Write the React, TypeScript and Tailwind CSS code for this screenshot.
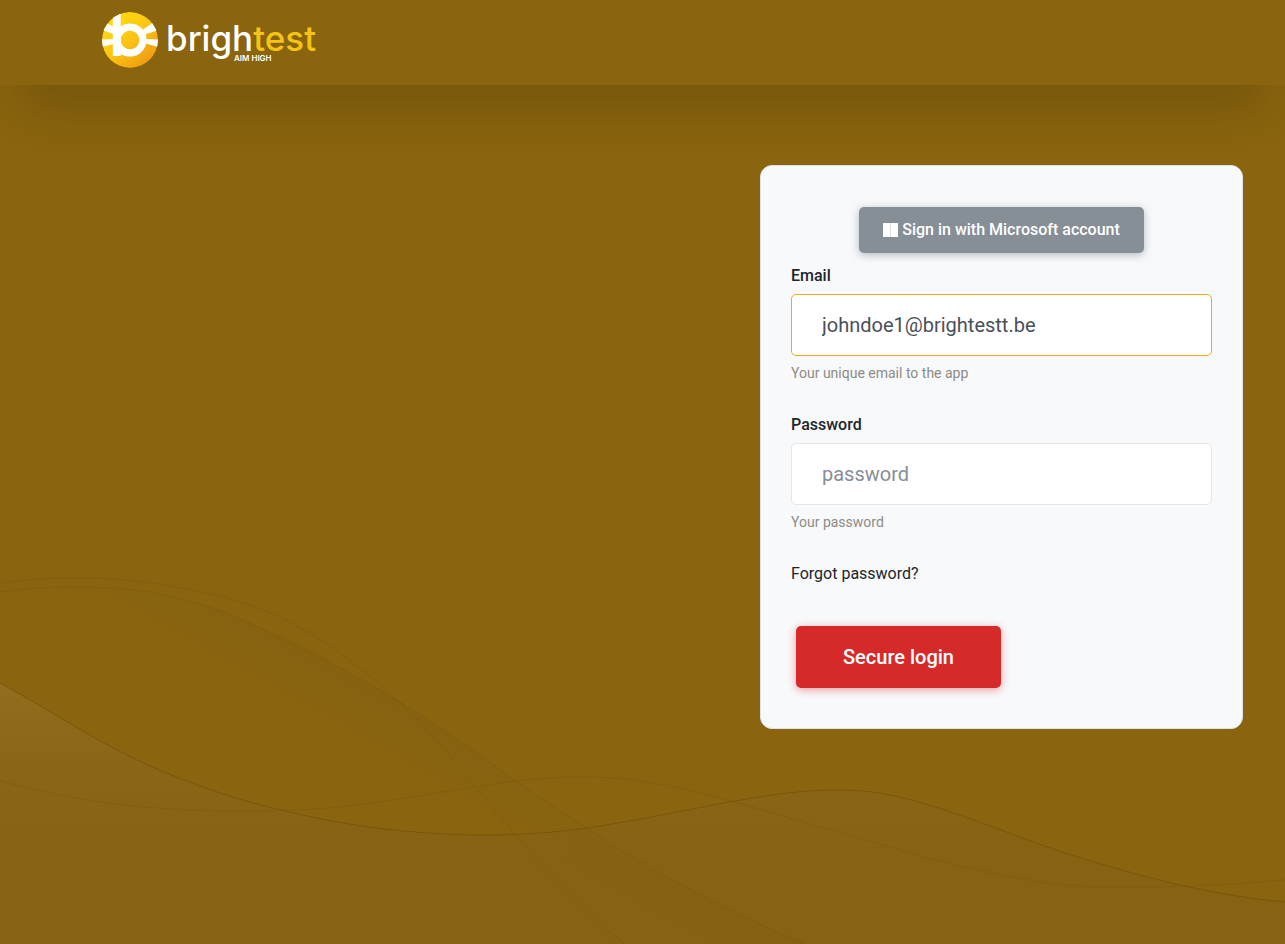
import React from "react";

function Waves() {
  return (
    <svg
      className="pointer-events-none absolute inset-x-0 bottom-0 -z-10 h-96 w-full"
      viewBox="0 560 1285 384"
      preserveAspectRatio="none"
      fill="none"
      aria-hidden="true"
    >
      <defs>
        <linearGradient id="hill" gradientUnits="userSpaceOnUse" x1="0" y1="683" x2="0" y2="860">
          <stop offset="0" stopColor="#926d1d" />
          <stop offset="0.5" stopColor="#8a6515" />
          <stop offset="1" stopColor="#876212" />
        </linearGradient>
        <linearGradient id="band" gradientUnits="userSpaceOnUse" x1="398" y1="701" x2="367" y2="756">
          <stop offset="0" stopColor="#7d5c18" stopOpacity="0.28" />
          <stop offset="1" stopColor="#7d5c18" stopOpacity="0" />
        </linearGradient>
      </defs>
      <path
        d="M0 683C55 713 104 747 159 770C200 787 240 801 286 811C350 827 420 835 486 835C530 835 570 831 600 826C650 818 695 808 735 801C775 794 806 790 836 790C852 790 866 791 880 793C915 799 955 813 993 827C1035 843 1075 857 1115 868C1160 881 1220 896 1285 902V944H0Z"
        fill="url(#hill)"
      />
      <path
        d="M0 592C25 588 50 587 75 587C98 587 120 588 143 591C180 597 213 606 245 621C300 645 350 672 398 701C440 727 478 754 516 781C560 811 600 837 640 862C690 890 745 920 805 944H0Z"
        fill="url(#band)"
      />
      <g stroke="#6e4f0b">
        <path
          strokeOpacity="0.28"
          d="M0 583C27 579 53 578 80 578C108 578 136 580 163 585C208 592 248 601 286 620C328 641 364 670 398 701C427 727 452 758 475 787C489 803 502 818 515 834C532 855 550 876 571 897C588 914 605 929 625 944"
        />
        <path
          strokeOpacity="0.28"
          d="M0 592C25 588 50 587 75 587C98 587 120 588 143 591C180 597 213 606 245 621C300 645 350 672 398 701C440 727 478 754 516 781C560 811 600 837 640 862C690 890 745 920 805 944"
        />
        <path
          strokeOpacity="0.65"
          d="M0 683C55 713 104 747 159 770C200 787 240 801 286 811C350 827 420 835 486 835C530 835 570 831 600 826C650 818 695 808 735 801C775 794 806 790 836 790C852 790 866 791 880 793C915 799 955 813 993 827C1035 843 1075 857 1115 868C1160 881 1220 896 1285 902"
        />
        <path
          strokeOpacity="0.28"
          d="M0 781C45 793 95 803 143 807C175 810 208 811 241 811C277 811 312 810 347 806C392 801 435 793 475 787C515 780 548 777 584 777C603 777 621 778 640 781C670 785 700 792 731 801C780 815 830 830 880 844C918 855 955 866 993 873C1029 881 1065 887 1102 887C1165 888 1225 885 1285 880"
        />
      </g>
    </svg>
  );
}

function LogoMark() {
  return (
    <svg className="size-14" viewBox="0 0 56 56" aria-hidden="true">
      <defs>
        <linearGradient id="sun" x1="0.15" y1="0.1" x2="0.85" y2="0.9">
          <stop offset="0" stopColor="#ffdc0e" />
          <stop offset="0.5" stopColor="#fbc412" />
          <stop offset="1" stopColor="#ed9c12" />
        </linearGradient>
        <clipPath id="disc">
          <circle cx="28" cy="28" r="28" />
        </clipPath>
      </defs>
      <g clipPath="url(#disc)">
        <circle cx="28" cy="28" r="28" fill="url(#sun)" />
        <g fill="#fff">
          <path d="M4.5 11L12 15V22.2L0 18Z" />
          <path d="M-1 27.6L12 27V32L-1 35Z" />
          <path d="M52 10L41 17.5L43 22.5L56 18.2Z" />
          <path d="M57 27.6L43 27V31.2L57 35.4Z" />
          <path d="M10.8 0H18.7V44H10.8Z" />
          <path
            fillRule="evenodd"
            d="M28 11.4A16.6 16.6 0 1 1 27.9 11.4ZM28 18.7A9.3 9.3 0 1 0 28.1 18.7Z"
          />
        </g>
      </g>
    </svg>
  );
}

function MicrosoftIcon() {
  return (
    <svg className="h-[14px] w-[15px]" viewBox="0 0 15 14" aria-hidden="true">
      <path fill="#fff" d="M0 0H7V7H0ZM8 0H15V7H8ZM0 7H7V14H0ZM8 7H15V14H8Z" />
      <path fill="#fff" fillOpacity="0.7" d="M7 0H8V14H7Z" />
    </svg>
  );
}

type FieldProps = {
  id: string;
  label: string;
  help: string;
  children: React.ReactNode;
};

function Field({ id, label, help, children }: FieldProps) {
  return (
    <div className="mb-[30px] flex flex-col">
      <label htmlFor={id} className="mb-1.5 text-base leading-6 font-medium text-[#212529]">
        {label}
      </label>
      {children}
      <small id={`${id}-help`} className="mt-[7px] text-sm leading-5 text-[#8c8c84]">
        {help}
      </small>
    </div>
  );
}

const inputClass =
  "h-[62px] w-full rounded-[5px] border bg-white px-[30px] text-xl text-[#495057] outline-none placeholder:text-[#868e96] placeholder:opacity-100";

export default function App() {
  return (
    <div className="relative isolate min-h-screen bg-[#8a640e] font-[Roboto,sans-serif] text-[#212529]">
      <Waves />
      <header className="flex h-[85px] items-start px-[102px] pt-3 shadow-[0_40px_50px_-20px_rgba(0,0,0,0.18)]">
        <a href="#" className="flex gap-2" aria-label="Brightest, aim high">
          <LogoMark />
          <span className="flex flex-col pt-1.5 font-[Inter,sans-serif] text-white">
            <span className="text-[35px] leading-10 font-medium">
              brigh<span className="text-[#f4c414]">test</span>
            </span>
            <span className="-mt-1 pl-[68px] text-[8px] leading-2 font-semibold">AIM HIGH</span>
          </span>
        </a>
      </header>

      <main className="flex justify-end px-[42px] py-20">
        <form
          className="w-full max-w-[483px] rounded-xl border border-[#dfe3e9] bg-[#f8f9fb] px-[30px] pt-[41px] pb-10"
          onSubmit={(event) => event.preventDefault()}
        >
          <div className="mb-[11px] flex justify-center">
            <button
              type="button"
              className="flex h-[46px] items-center gap-1 rounded-[5px] bg-[#868e96] px-6 text-base font-medium text-white shadow-[0_2px_8px_rgba(134,142,150,0.6)]"
            >
              <MicrosoftIcon />
              Sign in with Microsoft account
            </button>
          </div>

          <Field id="email" label="Email" help="Your unique email to the app">
            <input
              id="email"
              type="email"
              defaultValue="johndoe1@brightestt.be"
              aria-describedby="email-help"
              className={`${inputClass} border-[#edab16]`}
            />
          </Field>

          <Field id="password" label="Password" help="Your password">
            <input
              id="password"
              type="password"
              placeholder="password"
              aria-describedby="password-help"
              className={`${inputClass} border-[#e5e5e5]`}
            />
          </Field>

          <a href="#" className="block text-base leading-6">
            Forgot password?
          </a>

          <button
            type="submit"
            className="mt-10 ml-[5px] block h-[62px] rounded-[5px] bg-[#d62a2a] px-[47px] text-xl font-medium text-white shadow-[0_2px_8px_rgba(214,42,42,0.45)]"
          >
            Secure login
          </button>
        </form>
      </main>
    </div>
  );
}
